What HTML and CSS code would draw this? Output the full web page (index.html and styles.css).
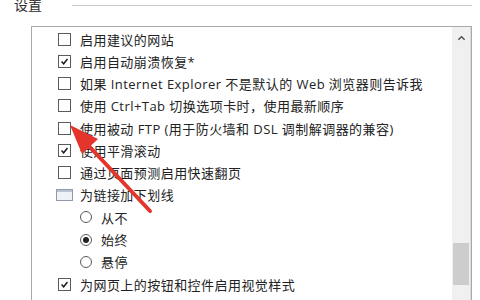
FILE: index.html
```html
<!DOCTYPE html>
<html>
<head>
    <title>设置</title>
    <link rel="stylesheet" href="styles.css">
</head>
<body>
    <!-- Group header -->
    <div class="header">
        <span class="title">设置</span>
        <div class="rule"></div>
    </div>

    <!-- Settings list -->
    <div class="listbox">
        <div class="items">
            <div class="row"><span class="check"></span>启用建议的网站</div>
            <div class="row"><span class="check on"><svg viewBox="0 0 13 13"><path d="M3 6.5 L5.5 9.2 L10 3.6"/></svg></span>启用自动崩溃恢复*</div>
            <div class="row"><span class="check"></span>如果 Internet Explorer 不是默认的 Web 浏览器则告诉我</div>
            <div class="row"><span class="check"></span>使用 Ctrl+Tab 切换选项卡时，使用最新顺序</div>
            <div class="row"><span class="check"></span>使用被动 FTP (用于防火墙和 DSL 调制解调器的兼容)</div>
            <div class="row"><span class="check on"><svg viewBox="0 0 13 13"><path d="M3 6.5 L5.5 9.2 L10 3.6"/></svg></span>使用平滑滚动</div>
            <div class="row"><span class="check"></span>通过页面预测启用快速翻页</div>
            <div class="row group"><span class="group-icon"><span></span></span>为链接加下划线</div>
            <div class="row sub"><span class="radio"></span>从不</div>
            <div class="row sub"><span class="radio on"></span>始终</div>
            <div class="row sub"><span class="radio"></span>悬停</div>
            <div class="row"><span class="check on"><svg viewBox="0 0 13 13"><path d="M3 6.5 L5.5 9.2 L10 3.6"/></svg></span>为网页上的按钮和控件启用视觉样式</div>
            <div class="row"><span class="check"></span>转到在地址栏中键入的站点</div>
        </div>
        <div class="scrollbar">
            <div class="arrow-up">
                <svg viewBox="0 0 10 6"><path d="M1.5 5 L5 1.5 L8.5 5"/></svg>
            </div>
            <div class="track">
                <div class="thumb"></div>
            </div>
        </div>
    </div>

    <!-- Red annotation arrow -->
    <svg class="annotation" width="480" height="300" viewBox="0 0 480 300">
        <path d="M86 143 L150 211" stroke="#e3352c" stroke-width="4" stroke-linecap="round"/>
        <polygon points="70,125 82,154 98,139" fill="#e3352c"/>
    </svg>
</body>
</html>
```

FILE: styles.css
```css
body {
    margin: 0;
    height: 300px;
    overflow: hidden;
    background: #fff;
    color: #222;
    font-family: "Open Sans", "Noto Sans CJK SC", sans-serif;
    position: relative;
}

.header {
    display: flex;
    align-items: center;
    height: 18px;
    margin-top: -4px;
    padding-left: 14px;
}

.title {
    font-size: 14px;
    line-height: 18px;
    color: #2a2a2a;
}

.rule {
    flex: 1;
    height: 1px;
    background: #c9c9c9;
    margin-left: 30px;
    margin-right: 8px;
}

.listbox {
    display: flex;
    margin: 12px 8px 0 31px;
    height: 280px;
    border: 1px solid #a9a9a9;
    border-bottom: none;
    overflow: hidden;
}

.items {
    flex: 1;
    padding-top: 1px;
}

.row {
    display: flex;
    align-items: center;
    height: 22.27px;
    padding-left: 26px;
    font-size: 13px;
    letter-spacing: 0.45px;
    white-space: nowrap;
}

.check {
    width: 11px;
    height: 11px;
    border: 1px solid #5a5a5a;
    background: #fff;
    margin-right: 9px;
    flex-shrink: 0;
}

.check svg {
    display: block;
    width: 11px;
    height: 11px;
}

.check path {
    fill: none;
    stroke: #1a1a1a;
    stroke-width: 1.7;
}

.group {
    padding-left: 24px;
}

.group-icon {
    width: 15px;
    height: 10px;
    border: 1px solid #8f9aa8;
    background: #eef2f7;
    margin-right: 7px;
    flex-shrink: 0;
}

.group-icon span {
    display: block;
    height: 2px;
    background: #b9c4d2;
}

.sub {
    padding-left: 48px;
}

.radio {
    width: 10px;
    height: 10px;
    border: 1px solid #5a5a5a;
    border-radius: 50%;
    margin-right: 9px;
    flex-shrink: 0;
    display: flex;
    align-items: center;
    justify-content: center;
}

.radio.on::after {
    content: "";
    width: 6px;
    height: 6px;
    border-radius: 50%;
    background: #222;
}

.scrollbar {
    width: 18px;
    background: #f0f0f0;
    border-right: 1px solid #dcdcdc;
    display: flex;
    flex-direction: column;
}

.arrow-up {
    height: 17px;
    display: flex;
    align-items: center;
    justify-content: center;
}

.arrow-up svg {
    width: 9px;
    height: 6px;
    margin-top: 4px;
}

.arrow-up path {
    fill: none;
    stroke: #505050;
    stroke-width: 1.6;
}

.track {
    flex: 1;
}

.thumb {
    margin: 199px 1px 0 1px;
    height: 42px;
    background: #cdcdcd;
}

.annotation {
    position: absolute;
    left: 0;
    top: 0;
}
```
